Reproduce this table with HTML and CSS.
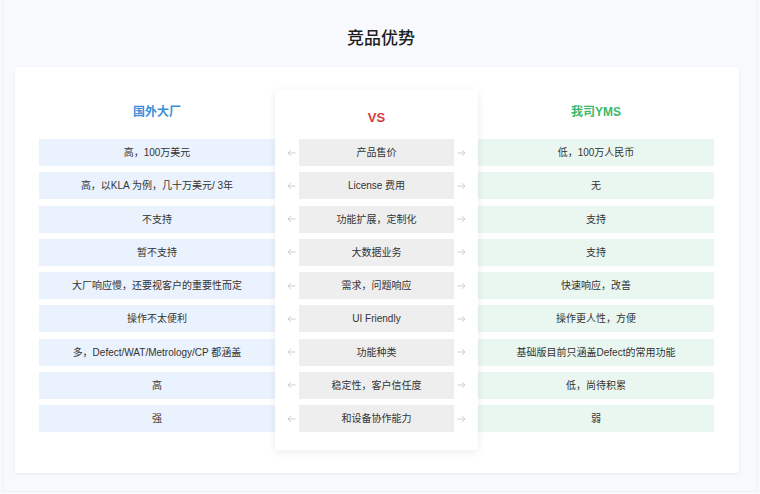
FILE: index.html
```html
<!DOCTYPE html>
<html lang="zh">
<head>
<meta charset="utf-8">
<link rel="stylesheet" href="styles.css">
</head>
<body>
<div class="frame">
  <h1 class="title">竞品优势</h1>
  <div class="card">
    <div class="col col-left">
      <div class="head head-left">国外大厂</div>
      <div class="cell cell-left">高，100万美元</div>
      <div class="cell cell-left">高，以KLA 为例，几十万美元/ 3年</div>
      <div class="cell cell-left">不支持</div>
      <div class="cell cell-left">暂不支持</div>
      <div class="cell cell-left">大厂响应慢，还要视客户的重要性而定</div>
      <div class="cell cell-left">操作不太便利</div>
      <div class="cell cell-left">多，Defect/WAT/Metrology/CP 都涵盖</div>
      <div class="cell cell-left">高</div>
      <div class="cell cell-left">强</div>
    </div>
    <div class="col panel">
      <div class="head head-vs">VS</div>
      <div class="prow"><span class="arr arr-l"><svg width="9" height="8" viewBox="0 0 9 8"><path d="M8.5 4H1M4 1L1 4L4 7" fill="none" stroke="#c9c9c9" stroke-width="0.9"/></svg></span><div class="cell cell-mid">产品售价</div><span class="arr arr-r"><svg width="9" height="8" viewBox="0 0 9 8"><path d="M0.5 4H8M5 1L8 4L5 7" fill="none" stroke="#c9c9c9" stroke-width="0.9"/></svg></span></div>
      <div class="prow"><span class="arr arr-l"><svg width="9" height="8" viewBox="0 0 9 8"><path d="M8.5 4H1M4 1L1 4L4 7" fill="none" stroke="#c9c9c9" stroke-width="0.9"/></svg></span><div class="cell cell-mid">License 费用</div><span class="arr arr-r"><svg width="9" height="8" viewBox="0 0 9 8"><path d="M0.5 4H8M5 1L8 4L5 7" fill="none" stroke="#c9c9c9" stroke-width="0.9"/></svg></span></div>
      <div class="prow"><span class="arr arr-l"><svg width="9" height="8" viewBox="0 0 9 8"><path d="M8.5 4H1M4 1L1 4L4 7" fill="none" stroke="#c9c9c9" stroke-width="0.9"/></svg></span><div class="cell cell-mid">功能扩展，定制化</div><span class="arr arr-r"><svg width="9" height="8" viewBox="0 0 9 8"><path d="M0.5 4H8M5 1L8 4L5 7" fill="none" stroke="#c9c9c9" stroke-width="0.9"/></svg></span></div>
      <div class="prow"><span class="arr arr-l"><svg width="9" height="8" viewBox="0 0 9 8"><path d="M8.5 4H1M4 1L1 4L4 7" fill="none" stroke="#c9c9c9" stroke-width="0.9"/></svg></span><div class="cell cell-mid">大数据业务</div><span class="arr arr-r"><svg width="9" height="8" viewBox="0 0 9 8"><path d="M0.5 4H8M5 1L8 4L5 7" fill="none" stroke="#c9c9c9" stroke-width="0.9"/></svg></span></div>
      <div class="prow"><span class="arr arr-l"><svg width="9" height="8" viewBox="0 0 9 8"><path d="M8.5 4H1M4 1L1 4L4 7" fill="none" stroke="#c9c9c9" stroke-width="0.9"/></svg></span><div class="cell cell-mid">需求，问题响应</div><span class="arr arr-r"><svg width="9" height="8" viewBox="0 0 9 8"><path d="M0.5 4H8M5 1L8 4L5 7" fill="none" stroke="#c9c9c9" stroke-width="0.9"/></svg></span></div>
      <div class="prow"><span class="arr arr-l"><svg width="9" height="8" viewBox="0 0 9 8"><path d="M8.5 4H1M4 1L1 4L4 7" fill="none" stroke="#c9c9c9" stroke-width="0.9"/></svg></span><div class="cell cell-mid">UI Friendly</div><span class="arr arr-r"><svg width="9" height="8" viewBox="0 0 9 8"><path d="M0.5 4H8M5 1L8 4L5 7" fill="none" stroke="#c9c9c9" stroke-width="0.9"/></svg></span></div>
      <div class="prow"><span class="arr arr-l"><svg width="9" height="8" viewBox="0 0 9 8"><path d="M8.5 4H1M4 1L1 4L4 7" fill="none" stroke="#c9c9c9" stroke-width="0.9"/></svg></span><div class="cell cell-mid">功能种类</div><span class="arr arr-r"><svg width="9" height="8" viewBox="0 0 9 8"><path d="M0.5 4H8M5 1L8 4L5 7" fill="none" stroke="#c9c9c9" stroke-width="0.9"/></svg></span></div>
      <div class="prow"><span class="arr arr-l"><svg width="9" height="8" viewBox="0 0 9 8"><path d="M8.5 4H1M4 1L1 4L4 7" fill="none" stroke="#c9c9c9" stroke-width="0.9"/></svg></span><div class="cell cell-mid">稳定性，客户信任度</div><span class="arr arr-r"><svg width="9" height="8" viewBox="0 0 9 8"><path d="M0.5 4H8M5 1L8 4L5 7" fill="none" stroke="#c9c9c9" stroke-width="0.9"/></svg></span></div>
      <div class="prow"><span class="arr arr-l"><svg width="9" height="8" viewBox="0 0 9 8"><path d="M8.5 4H1M4 1L1 4L4 7" fill="none" stroke="#c9c9c9" stroke-width="0.9"/></svg></span><div class="cell cell-mid">和设备协作能力</div><span class="arr arr-r"><svg width="9" height="8" viewBox="0 0 9 8"><path d="M0.5 4H8M5 1L8 4L5 7" fill="none" stroke="#c9c9c9" stroke-width="0.9"/></svg></span></div>
    </div>
    <div class="col col-right">
      <div class="head head-right">我司YMS</div>
      <div class="cell cell-right">低，100万人民币</div>
      <div class="cell cell-right">无</div>
      <div class="cell cell-right">支持</div>
      <div class="cell cell-right">支持</div>
      <div class="cell cell-right">快速响应，改善</div>
      <div class="cell cell-right">操作更人性，方便</div>
      <div class="cell cell-right">基础版目前只涵盖Defect的常用功能</div>
      <div class="cell cell-right">低，尚待积累</div>
      <div class="cell cell-right">弱</div>
    </div>
  </div>
</div>
</body>
</html>
```

FILE: styles.css
```css
* { box-sizing: border-box; }
html, body {
  margin: 0;
  padding: 0;
  background: #f8f9fc;
}
body {
  width: 760px;
  height: 494px;
  overflow: hidden;
  font-family: "Liberation Sans", "Noto Sans CJK SC", sans-serif;
  color: #333;
}
.frame {
  margin: 1px 2px 0 2px;
  height: 491px;
  border: 1px solid #f0f1f5;
  border-top: none;
  padding-top: 24px;
}
.title {
  margin: 0;
  height: 24px;
  line-height: 24px;
  text-align: center;
  font-family: "Noto Sans CJK SC", sans-serif;
  font-size: 17px;
  font-weight: 500;
  color: #1e1e1e;
  transform: translateX(1px);
}
.card {
  margin: 18px 0 0 12px;
  width: 724px;
  background: #fff;
  border-radius: 2px;
  box-shadow: 0 1px 3px rgba(0, 0, 0, 0.07);
  padding: 23px 25px 23px 24px;
  display: grid;
  grid-template-columns: 236px 203px 236px;
  align-items: start;
}
.col {
  display: flex;
  flex-direction: column;
  gap: 6.25px;
}
.head {
  height: 42.75px;
  line-height: 18px;
  text-align: center;
  font-weight: 700;
  font-family: "Liberation Sans", "Noto Sans CJK SC", sans-serif;
}
.head-left, .head-right {
  padding-top: 13px;
  font-size: 12px;
}
.head-left { color: #3a8fd8; }
.head-right { color: #3cb86c; }
.head-vs {
  padding-top: 19px;
  font-size: 13px;
  color: #d43a42;
}
.panel {
  background: #fff;
  box-shadow: 0 2px 8px rgba(0, 0, 0, 0.08);
  border-radius: 2px;
  padding-bottom: 18px;
  position: relative;
  margin-top: 0;
  z-index: 1;
}
.col-left, .col-right { margin-top: 0; }
.cell {
  height: 27px;
  line-height: 27px;
  text-align: center;
  font-size: 10px;
  color: #333;
  white-space: nowrap;
}
.cell-left { background: #e9f2fd; }
.cell-right { background: #eaf7f0; }
.prow {
  display: flex;
  align-items: center;
  height: 27px;
}
.cell-mid {
  flex: 0 0 155px;
  background: #eeeeef;
}
.arr {
  flex: 0 0 24px;
  display: flex;
  align-items: center;
  height: 27px;
}
.arr svg { display: block; }
.arr-l { justify-content: flex-end; padding-right: 3px; }
.arr-r { justify-content: flex-start; padding-left: 3px; }
```
